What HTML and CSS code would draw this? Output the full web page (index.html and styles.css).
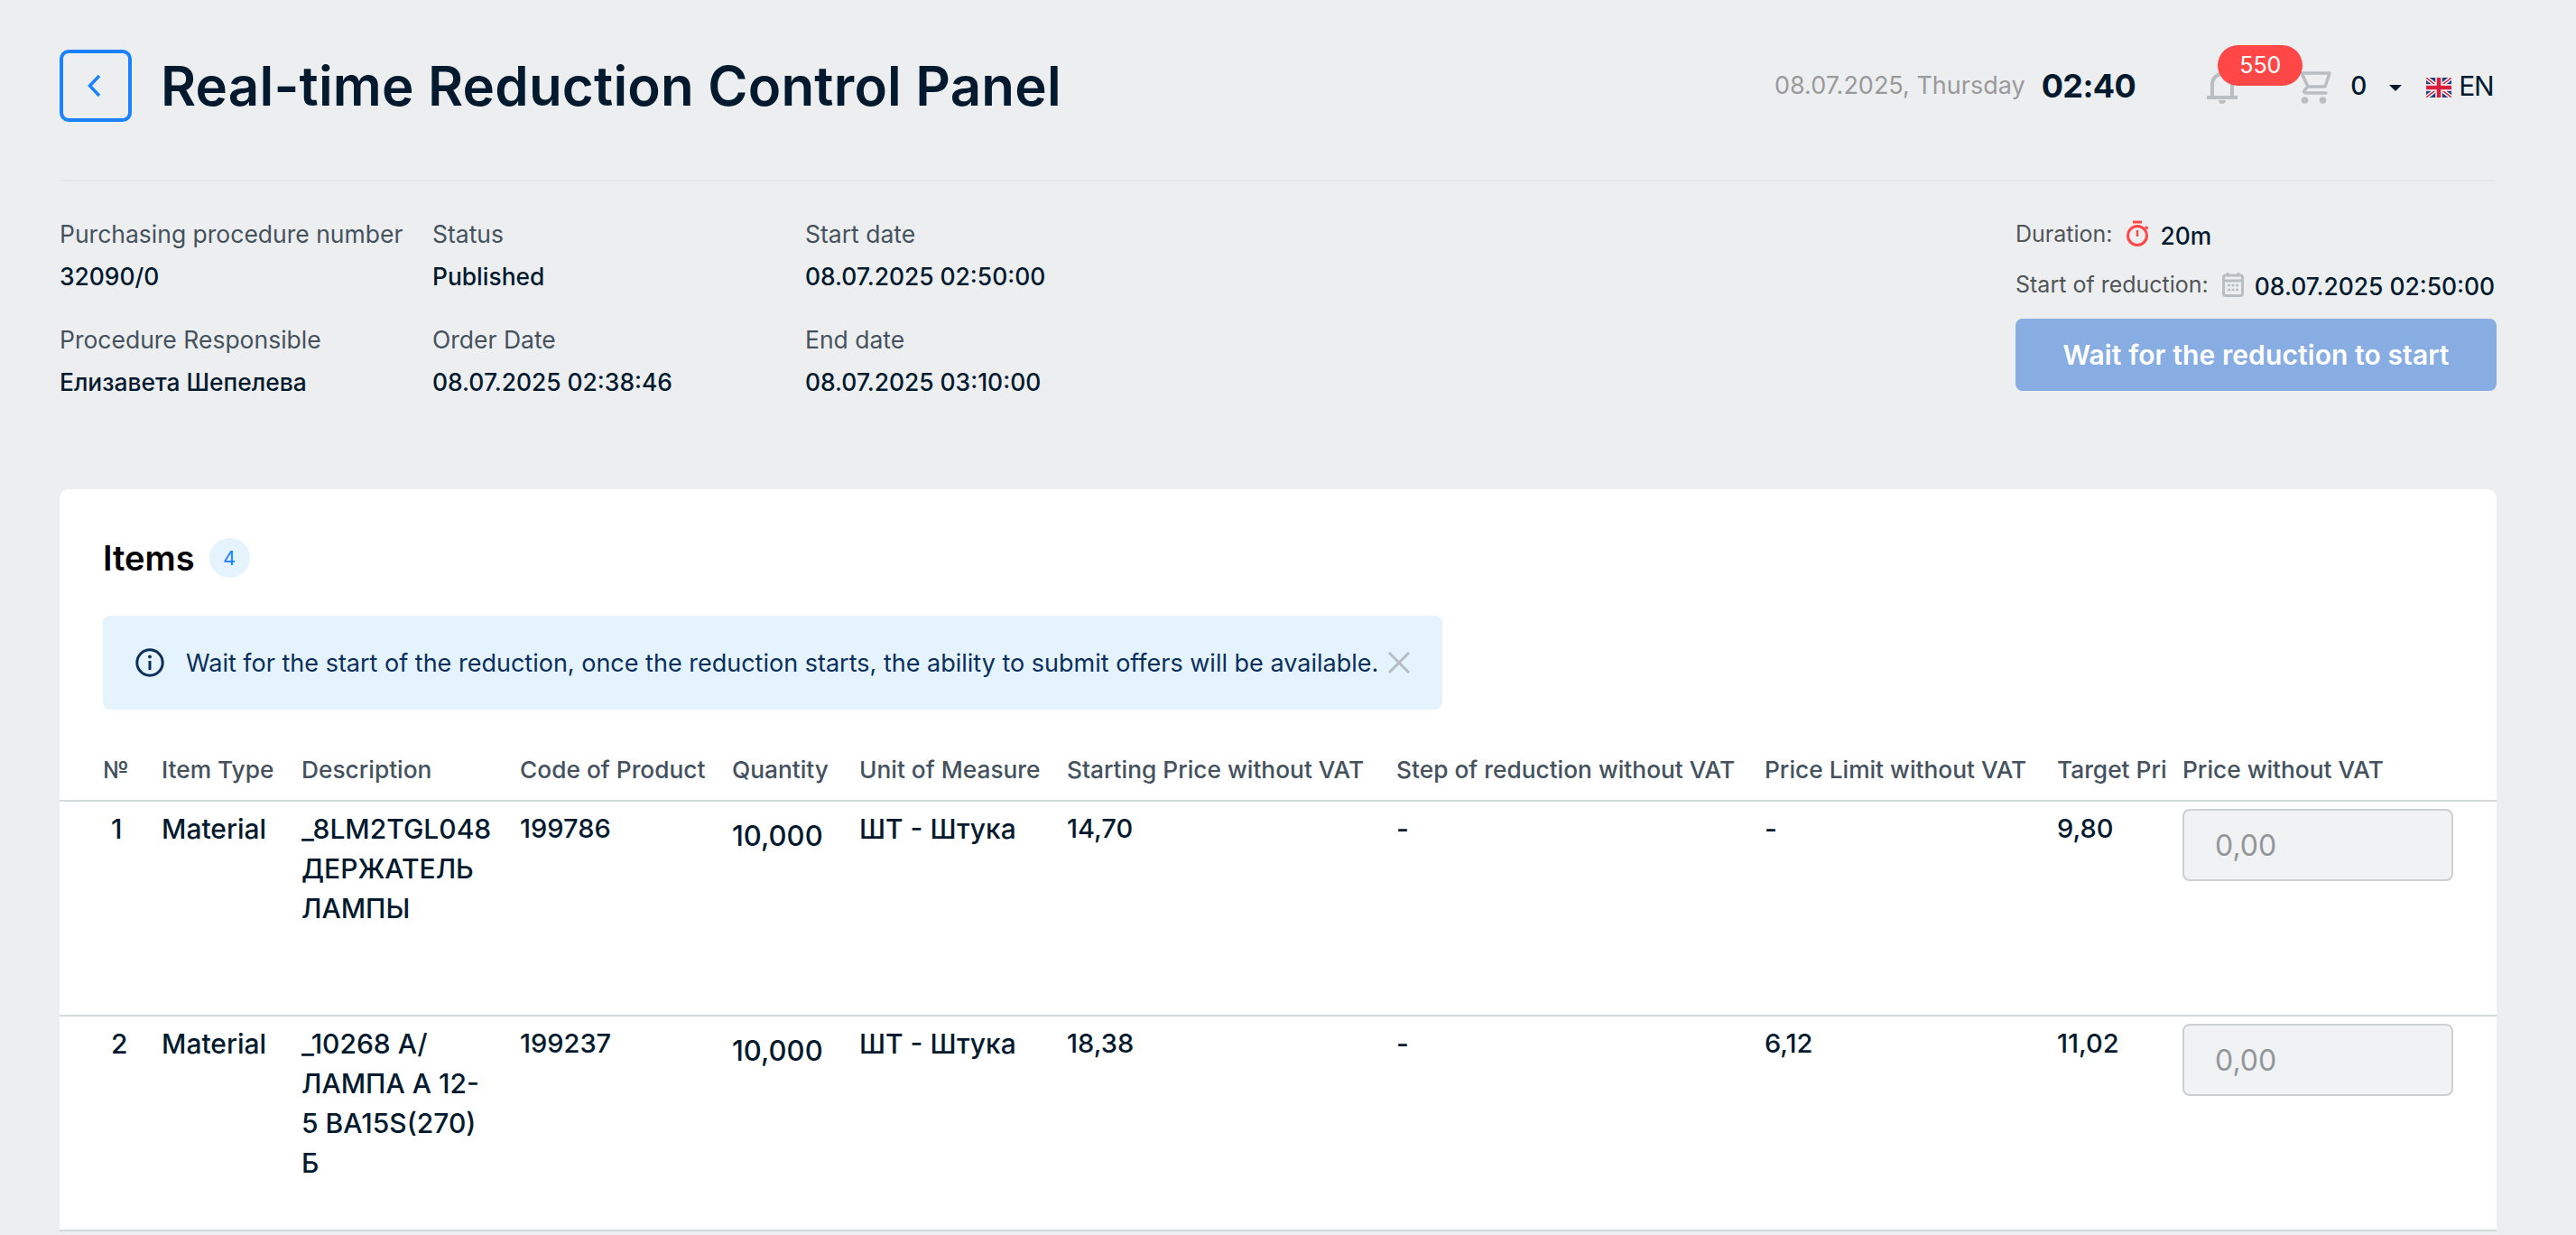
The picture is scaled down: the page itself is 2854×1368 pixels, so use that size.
FILE: index.html
```html
<!DOCTYPE html>
<html lang="en">
<head>
    <meta charset="UTF-8">
    <title>Real-time Reduction Control Panel</title>
    <link rel="stylesheet" href="styles.css">
</head>
<body>
    <div class="page">
        <header class="top-bar">
            <button class="back-btn" aria-label="Back">
                <svg width="24" height="26" viewBox="0 0 24 26" fill="none"><path d="M16 2 5.5 13 16 24" stroke="#1a81ff" stroke-width="3.4"/></svg>
            </button>
            <h1 class="page-title">Real-time Reduction Control Panel</h1>
            <div class="top-right">
                <span class="today">08.07.2025, Thursday</span>
                <span class="clock">02:40</span>
                <div class="bell">
                    <svg width="34" height="36" viewBox="0 0 34 36" fill="none">
                        <path d="M6 27V14a11 11 0 0 1 22 0v13" stroke="#b9bec3" stroke-width="4"/>
                        <path d="M1 29h32" stroke="#b9bec3" stroke-width="4" stroke-linecap="round"/>
                        <path d="M13 32h8a4 4 0 0 1-8 0z" fill="#b9bec3"/>
                    </svg>
                    <span class="bell-count">550</span>
                </div>
                <svg class="cart" width="34" height="37" viewBox="0 0 34 37" fill="none">
                    <path d="M1 2h31l-5 15H8z" stroke="#b9bec3" stroke-width="3.4" stroke-linejoin="round"/>
                    <path d="M8 17l-3.500 3.500Q2 24 6 24h22" stroke="#b9bec3" stroke-width="3.4" stroke-linecap="round"/>
                    <circle cx="4.500" cy="32" r="3.800" fill="#b9bec3"/>
                    <circle cx="24.500" cy="32" r="3.800" fill="#b9bec3"/>
                </svg>
                <span class="cart-count">0</span>
                <span class="caret"></span>
                <svg class="flag" width="28" height="22" viewBox="0 0 28 22">
                    <rect width="28" height="22" fill="#2b3f7e"/>
                    <path d="M0 0 28 22M28 0 0 22" stroke="#fff" stroke-width="4.4"/>
                    <path d="M0 0 28 22M28 0 0 22" stroke="#d8213f" stroke-width="1.4"/>
                    <path d="M14 0v22M0 11h28" stroke="#fff" stroke-width="7.4"/>
                    <path d="M14 0v22M0 11h28" stroke="#d8213f" stroke-width="4.6"/>
                </svg>
                <span class="lang">EN</span>
            </div>
        </header>

        <section class="summary">
            <div class="facts">
                <div class="fact"><span class="fact-label">Purchasing procedure number</span><span class="fact-value">32090/0</span></div>
                <div class="fact"><span class="fact-label">Status</span><span class="fact-value">Published</span></div>
                <div class="fact"><span class="fact-label">Start date</span><span class="fact-value">08.07.2025 02:50:00</span></div>
                <div class="fact"><span class="fact-label">Procedure Responsible</span><span class="fact-value">Елизавета Шепелева</span></div>
                <div class="fact"><span class="fact-label">Order Date</span><span class="fact-value">08.07.2025 02:38:46</span></div>
                <div class="fact"><span class="fact-label">End date</span><span class="fact-value">08.07.2025 03:10:00</span></div>
            </div>
            <div class="timing">
                <div class="timing-row">
                    <span class="timing-label">Duration:</span>
                    <svg width="26" height="30" viewBox="0 0 26 30" fill="none">
                        <circle cx="13" cy="17" r="10.5" stroke="#ff4747" stroke-width="3"/>
                        <path d="M8 2h10" stroke="#ff4747" stroke-width="3"/>
                        <path d="M13 11v7" stroke="#ff4747" stroke-width="2.4"/>
                        <path d="M22 7l2.5 2.5" stroke="#ff4747" stroke-width="2.6"/>
                    </svg>
                    <span class="timing-value">20m</span>
                </div>
                <div class="timing-row timing-row-start">
                    <span class="timing-label">Start of reduction:</span>
                    <svg width="24" height="28" viewBox="0 0 24 28" fill="none">
                        <rect x="1.5" y="4" width="21" height="22.5" rx="2.5" stroke="#b9bec3" stroke-width="3"/>
                        <path d="M2 10h20" stroke="#b9bec3" stroke-width="3"/>
                        <path d="M6 1v4M18 1v4" stroke="#b9bec3" stroke-width="2.6"/>
                        <path d="M6 15h12M6 20h12" stroke="#b9bec3" stroke-width="2.6" stroke-dasharray="3 1.5"/>
                    </svg>
                    <span class="timing-value">08.07.2025 02:50:00</span>
                </div>
                <button class="wait-btn" disabled>Wait for the reduction to start</button>
            </div>
        </section>

        <section class="card">
            <div class="card-head">
                <h2 class="card-title">Items</h2>
                <span class="count-pill">4</span>
            </div>
            <div class="notice">
                <svg width="32" height="32" viewBox="0 0 32 32" fill="none">
                    <circle cx="16" cy="16" r="14.2" stroke="#0a2f5c" stroke-width="3"/>
                    <path d="M16 14v10" stroke="#0a2f5c" stroke-width="3"/>
                    <circle cx="16" cy="9.5" r="1.9" fill="#0a2f5c"/>
                </svg>
                <span class="notice-text">Wait for the start of the reduction, once the reduction starts, the ability to submit offers will be available.</span>
                <svg class="notice-close" width="26" height="26" viewBox="0 0 26 26" fill="none"><path d="M2 2l22 22M24 2 2 24" stroke="#b5bcc2" stroke-width="3"/></svg>
            </div>
            <table class="items">
                <colgroup>
                    <col class="c-no"><col class="c-type"><col class="c-desc"><col class="c-code"><col class="c-qty"><col class="c-unit"><col class="c-start"><col class="c-step"><col class="c-limit"><col class="c-target"><col class="c-price">
                </colgroup>
                <thead>
                    <tr>
                        <th class="no-cell">№</th>
                        <th><span class="th-text">Item Type</span></th>
                        <th><span class="th-text">Description</span></th>
                        <th><span class="th-text">Code of Product</span></th>
                        <th><span class="th-text">Quantity</span></th>
                        <th><span class="th-text">Unit of Measure</span></th>
                        <th><span class="th-text">Starting Price without VAT</span></th>
                        <th><span class="th-text">Step of reduction without VAT</span></th>
                        <th><span class="th-text">Price Limit without VAT</span></th>
                        <th><span class="th-text">Target Price without VAT</span></th>
                        <th><span class="th-text">Price without VAT</span></th>
                    </tr>
                </thead>
                <tbody>
                    <tr>
                        <td class="no-cell no-value">1</td>
                        <td>Material</td>
                        <td>_8LM2TGL048<br>ДЕРЖАТЕЛЬ<br>ЛАМПЫ</td>
                        <td class="num">199786</td>
                        <td class="qty">10,000</td>
                        <td>ШТ - Штука</td>
                        <td class="num">14,70</td>
                        <td>-</td>
                        <td>-</td>
                        <td class="num">9,80</td>
                        <td class="price-cell"><input class="price-input" placeholder="0,00" disabled></td>
                    </tr>
                    <tr>
                        <td class="no-cell no-value">2</td>
                        <td>Material</td>
                        <td>_10268 A/<br>ЛАМПА А 12-<br>5 BA15S(270)<br>Б</td>
                        <td class="num">199237</td>
                        <td class="qty">10,000</td>
                        <td>ШТ - Штука</td>
                        <td class="num">18,38</td>
                        <td>-</td>
                        <td class="num">6,12</td>
                        <td class="num">11,02</td>
                        <td class="price-cell"><input class="price-input" placeholder="0,00" disabled></td>
                    </tr>
                </tbody>
            </table>
        </section>
    </div>
</body>
</html>
```

FILE: styles.css
```css
* {
    box-sizing: border-box;
}
html, body {
    margin: 0;
    height: 100%;
}
body {
    background: #edeef0;
    color: #031a2e;
    font-family: 'Inter', 'Noto Sans', sans-serif;
    overflow: hidden;
}
.page {
    padding: 55px 88px 0 66px;
}
.top-bar {
    display: flex;
    align-items: center;
    height: 146px;
    padding-bottom: 65px;
    border-bottom: 2px solid #e6e8ea;
}
.back-btn {
    width: 80px;
    height: 80px;
    border: 4px solid #1a81ff;
    border-radius: 10px;
    background: none;
    padding: 0;
    display: flex;
    align-items: center;
    justify-content: center;
}
.page-title {
    margin: 0 0 0 32px;
    font-size: 60px;
    font-weight: 600;
    letter-spacing: 0.2px;
    line-height: 80px;
}
.top-right {
    margin-left: auto;
    display: flex;
    align-items: center;
}
.today {
    color: #9a9a9a;
    font-size: 27px;
}
.clock {
    margin-left: 18px;
    font-size: 36px;
    font-weight: 700;
    letter-spacing: -0.6px;
}
.bell {
    position: relative;
    margin: 5px 0 0 79px;
    width: 34px;
    height: 36px;
}
.bell-count {
    position: absolute;
    left: 12px;
    top: -29px;
    width: 94px;
    height: 45px;
    border-radius: 23px;
    background: #ff4747;
    color: #fff;
    font-size: 25px;
    line-height: 45px;
    text-align: center;
}
.cart {
    margin: 5px 0 0 70px;
}
.cart-count {
    margin-left: 21px;
    font-size: 28px;
    font-weight: 500;
}
.caret {
    margin: 5px 0 0 25px;
    border-top: 7px solid #031a2e;
    border-left: 7px solid transparent;
    border-right: 7px solid transparent;
}
.flag {
    margin: 4px 0 0 27px;
}
.lang {
    margin: 0 4px 0 8px;
    font-size: 30px;
    letter-spacing: -1.5px;
}

.summary {
    display: flex;
    justify-content: space-between;
    align-items: flex-start;
    padding-top: 42px;
}
.facts {
    display: grid;
    grid-template-columns: 413px 413px 300px;
    row-gap: 38px;
}
.fact {
    display: flex;
    flex-direction: column;
    gap: 15px;
    white-space: nowrap;
}
.fact-label {
    color: #45525e;
    font-size: 26.5px;
    line-height: 32px;
}
.fact-value {
    font-size: 26.4px;
    font-weight: 500;
    line-height: 32px;
}
.timing {
    width: 533px;
    display: flex;
    flex-direction: column;
}
.timing-row {
    display: flex;
    align-items: center;
    height: 32px;
    gap: 12px;
    white-space: nowrap;
}
.timing-row-start {
    margin-top: 24px;
}
.timing-label {
    color: #515558;
    font-size: 25px;
    margin-right: 3px;
}
.timing-value {
    font-size: 26.4px;
    font-weight: 500;
    margin-top: 3px;
}
.wait-btn {
    margin-top: 22px;
    height: 80px;
    border: none;
    border-radius: 8px;
    background: #87ade2;
    color: #fff;
    font-family: inherit;
    font-size: 30px;
    font-weight: 600;
    letter-spacing: 0.1px;
}

.card {
    margin-top: 103px;
    background: #fff;
    border-radius: 10px 10px 0 0;
    padding-top: 54px;
}
.card-head {
    display: flex;
    align-items: center;
    gap: 16px;
    padding-left: 48px;
    height: 44px;
}
.card-title {
    margin: 0;
    font-size: 38px;
    font-weight: 600;
    color: #000;
}
.count-pill {
    width: 45px;
    height: 44px;
    border-radius: 22px;
    background: #e5f3fd;
    color: #1a81ff;
    font-size: 22px;
    line-height: 44px;
    text-align: center;
}
.notice {
    margin: 42px 0 0 48px;
    width: 1484px;
    height: 104px;
    display: flex;
    align-items: center;
    padding-left: 36px;
    background: #e5f3fd;
    border-radius: 8px;
}
.notice-text {
    margin-left: 24px;
    color: #0a2f5c;
    font-size: 27px;
    white-space: nowrap;
}
.notice-close {
    margin-left: 10px;
}
.items {
    margin-top: 40px;
    width: 100%;
    table-layout: fixed;
    border-collapse: collapse;
}
.c-no { width: 113px; }
.c-type { width: 155px; }
.c-desc { width: 242px; }
.c-code { width: 235px; }
.c-qty { width: 141px; }
.c-unit { width: 230px; }
.c-start { width: 365px; }
.c-step { width: 408px; }
.c-limit { width: 324px; }
.c-target { width: 139px; }
.c-price { width: 348px; }
.items th {
    height: 61px;
    padding: 0 18px 8px 0;
    color: #45525e;
    font-size: 26.3px;
    font-weight: 500;
    text-align: left;
    border-bottom: 2px solid #d5d9dc;
}
.items th:last-child {
    padding-right: 48px;
}
.th-text {
    display: block;
    overflow: hidden;
    white-space: nowrap;
}
.items th.no-cell {
    padding-left: 48px;
    padding-right: 0;
}
.items td {
    height: 238px;
    padding: 8px 0 0 0;
    vertical-align: top;
    font-size: 30px;
    font-weight: 500;
    line-height: 44px;
    white-space: nowrap;
    border-bottom: 2px solid #d5d9dc;
}
.items td.no-value {
    padding-left: 57px;
}
.items td.num {
    font-size: 29px;
}
.items td.qty {
    padding-top: 16px;
    font-size: 31px;
}
.items td.price-cell {
    padding-right: 48px;
}
.price-input {
    display: block;
    width: 100%;
    height: 80px;
    padding: 0 34px;
    border: 2px solid #ccd0d3;
    border-radius: 8px;
    background: #f1f2f4;
    font-family: inherit;
    font-size: 32px;
}
.price-input::placeholder {
    color: #929699;
}
```
